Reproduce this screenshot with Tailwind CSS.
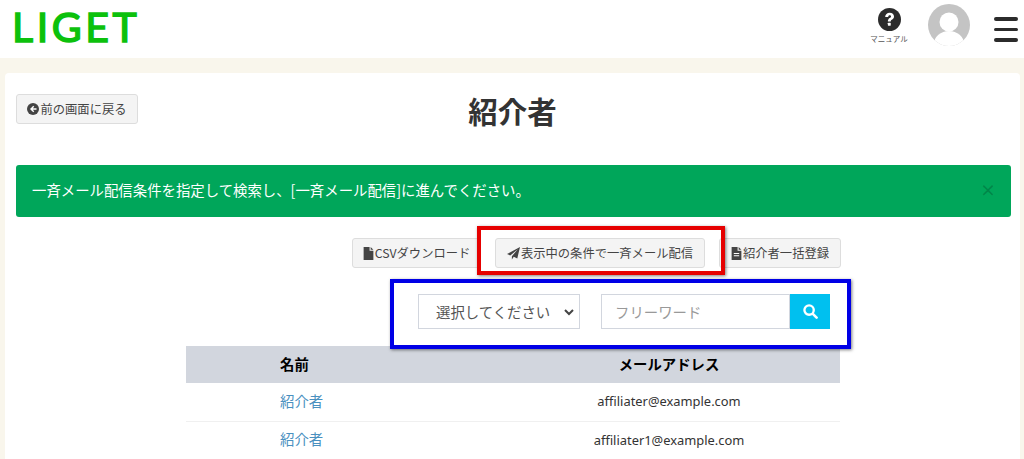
<!DOCTYPE html>
<html lang="ja">
<head>
<meta charset="utf-8">
<script src="https://cdn.jsdelivr.net/npm/@tailwindcss/browser@4"></script>
</head>
<body class="relative h-[459px] w-[1024px] overflow-hidden bg-[#f9f6ec] font-['Noto_Sans_CJK_JP','Noto_Sans',sans-serif] text-[#333]">
<header class="flex h-[58px] items-start bg-white pl-[12px] pr-[6px]">
  <div class="mt-[6px] font-['Lato',sans-serif] text-[41px] font-normal leading-[42px] tracking-[3.600px] text-[#0cc10c] [-webkit-text-stroke:1.500px_#0cc10c]">LIGET</div>
  <div class="ml-auto flex items-start">
    <div class="flex w-[38px] flex-col items-center pt-[8px]">
      <svg viewBox="0 0 24 24" class="ml-[2px] h-[23px] w-[23px]"><circle cx="12" cy="12" r="12" fill="#2c2c2c"/><path d="M7.500 9.300C7.500 6.700 9.500 5 12.200 5c2.700 0 4.500 1.500 4.500 3.800 0 1.800-1.100 2.700-2.300 3.500-.8.500-1.100.9-1.100 1.800h-3c0-1.900.7-2.900 1.900-3.700.9-.6 1.400-1 1.400-1.600 0-.7-.6-1.200-1.400-1.200-.9 0-1.500.6-1.600 1.700z" fill="#fff"/><rect x="10.300" y="15.400" width="3" height="3.100" rx=".5" fill="#fff"/></svg>
      <span class="ml-[2px] mt-[3px] whitespace-nowrap text-[7.500px] leading-[10px] text-[#555]">マニュアル</span>
    </div>
    <svg viewBox="0 0 42 42" class="ml-[21px] mt-[4px] h-[42px] w-[42px]"><defs><clipPath id="c"><circle cx="21" cy="21" r="21"/></clipPath></defs><circle cx="21" cy="21" r="21" fill="#c4c4c4"/><g clip-path="url(#c)" fill="#fff"><circle cx="21" cy="18" r="9.500"/><ellipse cx="21" cy="40" rx="15" ry="13"/></g></svg>
    <div class="ml-[24px] mt-[17px] flex w-[24px] flex-col gap-[7px]">
      <span class="h-[3.500px] rounded-full bg-[#2b2b2b]"></span>
      <span class="h-[3.500px] rounded-full bg-[#2b2b2b]"></span>
      <span class="h-[3.500px] rounded-full bg-[#2b2b2b]"></span>
    </div>
  </div>
</header>

<main class="mx-[5px] mt-[15px] h-[400px] w-[1015px] rounded-[4px] bg-white px-[11px] pt-[21px]">
  <div class="relative flex h-[50px] items-start justify-center">
    <a class="absolute left-0 top-0 flex h-[30px] w-[122px] items-center justify-center gap-[1px] rounded-[3px] border border-[#ddd] bg-[#f4f4f4] text-[12.300px] text-[#444]">
      <svg viewBox="0 0 24 24" class="h-[12px] w-[12px]"><circle cx="12" cy="12" r="12" fill="#444"/><path d="M12.500 5.500 6 12l6.500 6.500 2-2-3-3H19v-3h-7.500l3-3z" fill="#fff"/></svg>
      前の画面に戻る
    </a>
    <h1 class="mt-[-4px] text-[29.500px] font-bold leading-[40px]">紹介者</h1>
  </div>

  <div class="relative mt-[21px] flex h-[52px] w-[995px] items-center rounded-[3px] bg-[#00a65a] pl-[16px] pb-[2px] text-[14.400px] text-white">
    一斉メール配信条件を指定して検索し、[一斉メール配信]に進んでください。
    <span class="absolute right-[15px] top-[14px] text-[16px] font-bold leading-[20px] text-black/20">×</span>
  </div>

  <div class="ml-[336px] mt-[21px] flex h-[30px] gap-[14px] text-[12.300px] text-[#444]">
    <a class="flex w-[129px] items-center justify-center gap-[1px] rounded-[3px] border border-[#ddd] bg-[#f4f4f4]">
      <svg viewBox="0 0 20 24" class="h-[13px] w-[11px]"><path d="M1 0h11v7h7v17H1zM14 0l5 5h-5z" fill="#444"/></svg>CSVダウンロード
    </a>
    <a class="flex w-[210px] items-center justify-center gap-[1px] rounded-[3px] border border-[#ddd] bg-[#f4f4f4]">
      <svg viewBox="0 0 24 24" class="h-[13px] w-[13px]"><path d="M24 0 19 21l-6.500-3L9 23v-6L20 4 6 15.500 0 13z" fill="#444"/></svg>表示中の条件で一斉メール配信
    </a>
    <a class="flex w-[122px] items-center justify-center gap-[1px] rounded-[3px] border border-[#ddd] bg-[#f4f4f4]">
      <svg viewBox="0 0 20 24" class="h-[13px] w-[11px]"><path d="M1 0h11v7h7v17H1zM14 0l5 5h-5z" fill="#444"/><path d="M5 11h10v2H5zM5 15h10v2H5z" fill="#fff"/></svg>紹介者一括登録
    </a>
  </div>

  <div class="ml-[402px] mt-[26px] flex h-[35px]">
    <div class="flex h-[35px] w-[162px] items-center justify-between border border-[#d2d6de] pl-[17px] pr-[4px] text-[14.400px] text-[#555]">
      選択してください
      <svg viewBox="0 0 12 12" class="h-[12px] w-[12px]"><path d="m2 4 4 4 4-4" fill="none" stroke="#444" stroke-width="2"/></svg>
    </div>
    <div class="ml-[21px] flex h-[35px] w-[189px] items-center border border-[#d2d6de] pl-[13px] text-[14.400px] text-[#999]">フリーワード</div>
    <button class="flex h-[35px] w-[40px] items-center justify-center bg-[#00c0ef]">
      <svg viewBox="0 0 16 16" class="h-[15px] w-[15px]"><circle cx="6.500" cy="6.500" r="5" fill="none" stroke="#fff" stroke-width="2.500"/><path d="m10.500 10.500 4 4" stroke="#fff" stroke-width="2.800" stroke-linecap="round"/></svg>
    </button>
  </div>

  <table class="ml-[170px] mt-[17px] w-[654px] table-fixed border-collapse text-[14.400px]">
    <thead>
      <tr class="h-[37px] bg-[#d2d6de] font-bold text-black">
        <th class="w-[94px] p-0"></th>
        <th class="w-[200px] p-0 pb-[2px] text-left">名前</th>
        <th class="p-0 pb-[2px] pl-[18px] text-center">メールアドレス</th>
      </tr>
    </thead>
    <tbody>
      <tr class="h-[38px] border-b border-[#f0f0f0]">
        <td></td>
        <td class="pb-[2px] text-[#4a90bf]">紹介者</td>
        <td class="pl-[18px] text-center font-['Noto_Sans',sans-serif] text-[12.900px] text-[#333]">affiliater@example.com</td>
      </tr>
      <tr class="h-[38px]">
        <td></td>
        <td class="pb-[2px] text-[#4a90bf]">紹介者</td>
        <td class="pl-[18px] text-center font-['Noto_Sans',sans-serif] text-[12.900px] text-[#333]">affiliater1@example.com</td>
      </tr>
    </tbody>
  </table>
</main>

<div class="absolute left-[477px] top-[226px] h-[49px] w-[248px] border-[4px] border-[#e60000] shadow-[1px_1px_3px_rgba(0,0,0,0.5)]"></div>
<div class="absolute left-[390px] top-[279px] h-[70px] w-[461px] border-[4px] border-[#0000e6] shadow-[1px_1px_3px_rgba(0,0,0,0.5)]"></div>
</body>
</html>
